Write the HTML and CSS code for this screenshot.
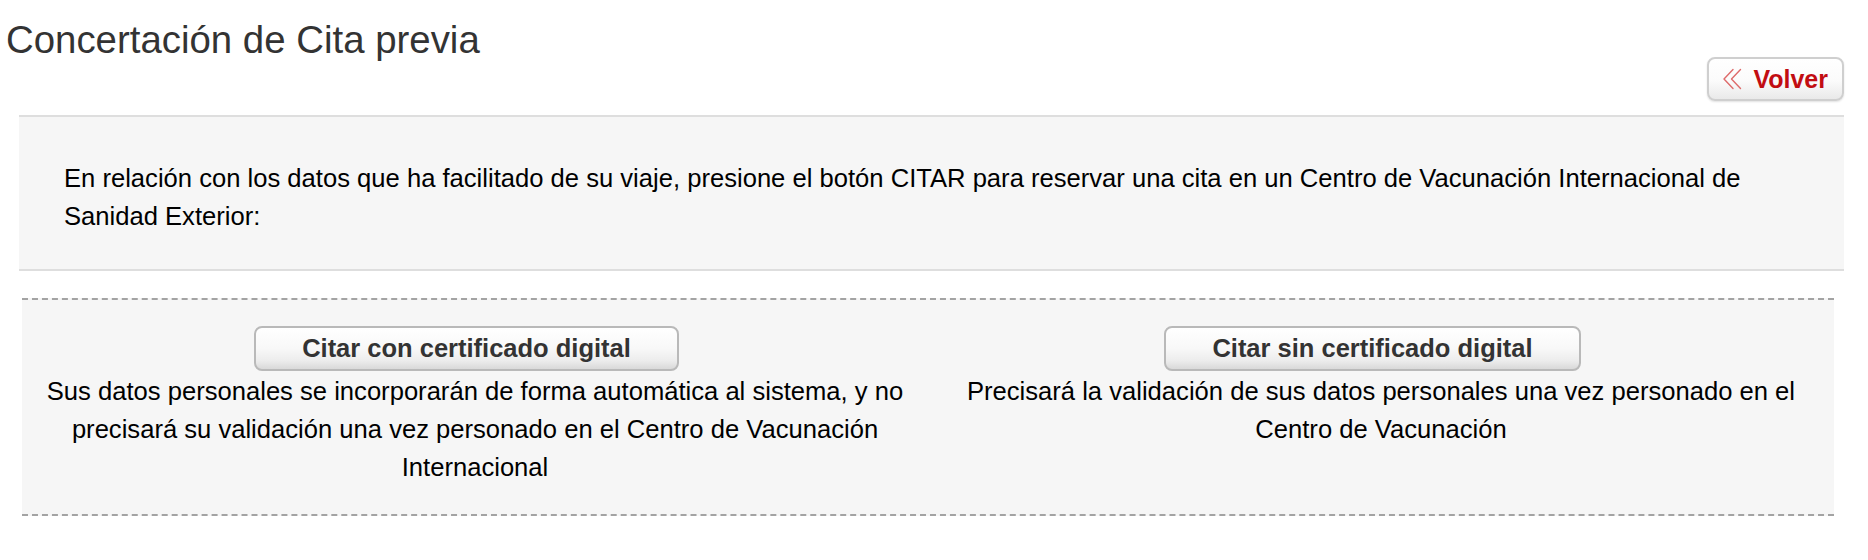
FILE: index.html
```html
<!DOCTYPE html>
<html lang="es">
<head>
<meta charset="utf-8">
<title>Concertación de Cita previa</title>
<link rel="stylesheet" href="styles.css">
</head>
<body>
<header class="header">
  <h1 class="title">Concertación de Cita previa</h1>
  <div class="actions">
    <a class="btn-back" href="#">
      <svg class="btn-back__icon" width="20" height="22" viewBox="0 0 20 22" aria-hidden="true">
        <path d="M11 1.5 L2 11 L11 20.5 M18.5 1.5 L9.5 11 L18.5 20.5" fill="none" stroke="#de6b6b" stroke-width="1.4" stroke-linecap="round" stroke-linejoin="round"/>
      </svg>
      <span>Volver</span>
    </a>
  </div>
</header>
<main class="content">
  <section class="info">
    <p class="info__text">En relación con los datos que ha facilitado de su viaje, presione el botón CITAR para reservar una cita en un Centro de Vacunación Internacional de Sanidad Exterior:</p>
  </section>
  <section class="options">
    <div class="option">
      <button class="btn" type="button">Citar con certificado digital</button>
      <p class="option__text">Sus datos personales se incorporarán de forma automática al sistema, y no precisará su validación una vez personado en el Centro de Vacunación Internacional</p>
    </div>
    <div class="option">
      <button class="btn" type="button">Citar sin certificado digital</button>
      <p class="option__text">Precisará la validación de sus datos personales una vez personado en el Centro de Vacunación</p>
    </div>
  </section>
</main>
</body>
</html>
```
FILE: styles.css
```css
* { box-sizing: border-box; }

html, body {
  margin: 0;
  padding: 0;
  background: #ffffff;
}

body {
  font-family: "Liberation Sans", Arial, Helvetica, sans-serif;
  color: #000;
}

.header {
  display: flex;
  flex-direction: column;
}

.title {
  margin: 22px 0 0 6px;
  font-size: 38.4px;
  line-height: 35px;
  font-weight: normal;
  color: #333;
}

.actions {
  display: flex;
  justify-content: flex-end;
  padding-right: 24px;
}

.btn-back {
  display: flex;
  align-items: center;
  gap: 11px;
  height: 44px;
  padding: 0 14px 0 13px;
  border: 2px solid #cfcfcf;
  border-radius: 8px;
  background: linear-gradient(#ffffff 0%, #fbfbfb 55%, #e9e9e9 100%);
  box-shadow: 0 1px 2px rgba(0, 0, 0, 0.12);
  color: #c20d12;
  font-size: 25px;
  font-weight: bold;
  line-height: 40px;
  text-decoration: none;
}

.btn-back__icon {
  display: block;
  flex: none;
}

.content {
  padding: 0 24px 0 19px;
}

.info {
  margin-top: 14px;
  background: #f6f6f6;
  border-top: 2px solid #dedede;
  border-bottom: 2px solid #dedede;
  padding: 42px 60px 34px 45px;
}

.info__text {
  margin: 0;
  font-size: 25.6px;
  line-height: 38px;
}

.options {
  margin: 27px 10px 0 3px;
  background: #f6f6f6;
  border-top: 2px dashed #a3a3a3;
  border-bottom: 2px dashed #a3a3a3;
  padding: 26px 0 28px;
  display: grid;
  grid-template-columns: 1fr 1fr;
}

.option {
  display: flex;
  flex-direction: column;
  align-items: center;
  padding: 0 10px;
  text-align: center;
}

.btn {
  height: 45px;
  margin-right: 17px;
  padding: 0 46px;
  border: 2px solid #b9b9b9;
  border-radius: 8px;
  background: linear-gradient(#ffffff 0%, #f8f8f8 50%, #ececec 80%, #d9d9d9 100%);
  font-family: "Liberation Sans", Arial, Helvetica, sans-serif;
  font-size: 25.5px;
  font-weight: bold;
  line-height: 41px;
  color: #333;
  cursor: pointer;
}

.option__text {
  margin: 1px 0 0;
  font-size: 25.6px;
  line-height: 38px;
}
```
